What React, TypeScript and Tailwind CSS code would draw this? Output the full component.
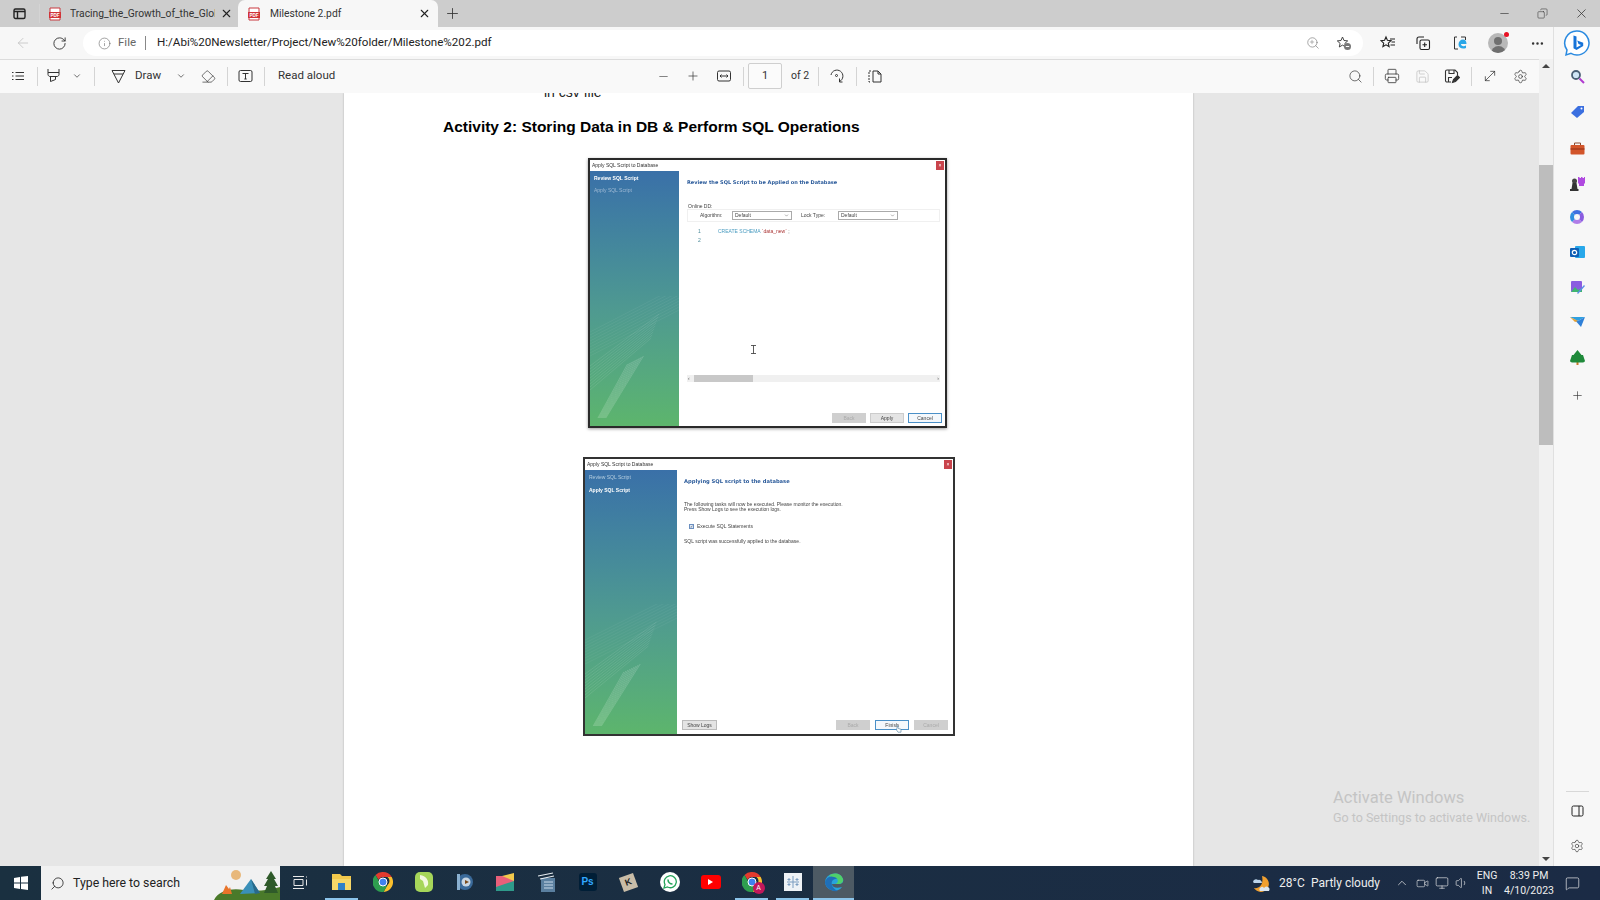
import { ChevronDown, Eraser, Minus, Plus, Search, Printer, Save, Settings, MoveDiagonal, RotateCw, Info, ArrowLeft, X, MoreHorizontal, ChevronUp, Volume1, Monitor, MessageSquare, Video, Copy } from 'lucide-react'

const UI = "font-['Roboto',sans-serif]"

function Sep({ className = '' }: { className?: string }) {
  return <div className={`w-px h-[19px] bg-[#d4d4d4] shrink-0 ${className}`} />
}

function PdfIcon() {
  return (
    <svg width="14" height="14" viewBox="0 0 14 14" className="shrink-0">
      <path d="M2 1h10v12H2z" fill="#fff" stroke="#c8383f" />
      <rect x="1" y="5" width="12" height="6" fill="#d13438" />
      <text x="7" y="9.6" fontSize="4.6" fontWeight="700" fill="#fff" textAnchor="middle" fontFamily="Liberation Sans">PDF</text>
    </svg>
  )
}

function Tabs() {
  return (
    <div className={`h-[27px] bg-[#cdcdcd] flex items-center text-[10.300px] text-[#333] ${UI}`}>
      <div className="w-[39px] flex justify-center">
        <svg width="13" height="13" viewBox="0 0 13 13" fill="none" stroke="#222" strokeWidth="1.4">
          <rect x="1" y="2" width="11" height="9.5" rx="1.5" />
          <path d="M1 4.500h11M4.500 4.500v7" />
        </svg>
      </div>
      <Sep className="h-[18px] bg-[#8f8f8f]" />
      <div className="w-[198px] h-full flex items-center pl-[8px]">
        <PdfIcon />
        <div className="ml-[8px] w-[145px] overflow-hidden whitespace-nowrap mt-[1px]">Tracing_the_Growth_of_the_Glob</div>
        <X size={13} className="ml-[5px] text-[#222]" />
      </div>
      <div className="w-[200px] h-full bg-[#f7f7f7] rounded-t-[7px] flex items-center pl-[9px]">
        <PdfIcon />
        <div className="ml-[9px] flex-1 mt-[1px]">Milestone 2.pdf</div>
        <X size={13} className="mr-[7px] text-[#222]" />
      </div>
      <Plus size={17} strokeWidth={1.2} className="ml-[6px] text-[#333]" />
      <div className="ml-auto flex items-center text-[#333]">
        <Minus size={13} strokeWidth={1.2} className="mr-[26px]" />
        <Copy size={11} strokeWidth={1.2} className="mr-[26px] -scale-x-100" />
        <X size={15} strokeWidth={1.2} className="mr-[11px]" />
      </div>
    </div>
  )
}

function StarAdd() {
  return (
    <svg width="16" height="16" viewBox="0 0 16 16" fill="none" stroke="#444" strokeWidth="1">
      <path d="M6.5 2l1.5 3.5 3.7.4-2.8 2.5.8 3.6-3.2-1.9-3.2 1.9.8-3.6L1.3 5.900l3.700-.4z" />
      <circle cx="11.500" cy="11.500" r="3.500" fill="#777" stroke="none" />
      <path d="M9.800 11.500h3.400" stroke="#fff" />
    </svg>
  )
}

function Favorites() {
  return (
    <svg width="16" height="16" viewBox="0 0 16 16" fill="none" stroke="#222" strokeWidth="1.100">
      <path d="M6 2l1.400 3.300 3.600.4-2.700 2.400.8 3.500L6 9.800l-3.100 1.800.8-3.500L1 5.700l3.600-.4z" />
      <path d="M10 4h5M11.500 7h3.500M10.500 10h4.500" />
    </svg>
  )
}

function Collections() {
  return (
    <svg width="16" height="16" viewBox="0 0 16 16" fill="none" stroke="#222" strokeWidth="1.100">
      <path d="M2 9V4a2 2 0 0 1 2-2h5" />
      <rect x="5" y="5" width="9.500" height="9.500" rx="1.500" />
      <path d="M9.700 7.500v4.500M7.500 9.700H12" />
    </svg>
  )
}

function EdgeE() {
  return (
    <svg width="16" height="16" viewBox="0 0 16 16" fill="none">
      <path d="M5 2H2.500v12H6M9 2h4.500v3" stroke="#333" strokeWidth="1" />
      <path d="M6.500 9.500c0-3 2-5 4.500-5s3.500 2 3.500 4.500H9c0 2 2.500 3 5 1.500v2.500c-3.500 1.500-7.500 0-7.500-3.500z" fill="#2aa7e8" />
    </svg>
  )
}

function Profile() {
  return (
    <div className="relative w-[20px] h-[20px] rounded-full bg-[#b8b8b8] overflow-hidden">
      <div className="mx-auto mt-[4px] w-[8px] h-[8px] rounded-full bg-[#6f6f6f]" />
      <div className="mx-auto mt-[1px] w-[15px] h-[8px] rounded-t-full bg-[#6f6f6f]" />
    </div>
  )
}

function AddressBar() {
  return (
    <div className={`h-[32px] flex items-center bg-[#f7f7f7] text-[#333] ${UI}`}>
      <ArrowLeft size={16} strokeWidth={1.200} className="ml-[15px] text-[#c2c2c2]" />
      <RotateCw size={15} strokeWidth={1.500} className="ml-[21px] text-[#333]" />
      <div className="ml-[16px] w-[1280px] h-[26px] bg-white rounded-full flex items-center">
        <Info size={13} strokeWidth={1.100} className="ml-[15px] text-[#666]" />
        <span className="ml-[7px] w-[18px] text-[11.500px] text-[#666]">File</span>
        <div className="ml-[9px] w-px h-[14px] bg-[#888]" />
        <span className="ml-[11px] text-[11.600px] text-[#222] whitespace-nowrap">H:/Abi%20Newsletter/Project/New%20folder/Milestone%202.pdf</span>
        <div className="ml-auto flex items-center">
          <div className="relative w-[14px] h-[14px] mr-[16px]">
            <Search size={14} strokeWidth={1.100} className="text-[#777]" />
            <Plus size={6} className="absolute left-[3px] top-[3px] text-[#777]" />
          </div>
          <div className="mr-[11px]"><StarAdd /></div>
        </div>
      </div>
      <div className="ml-[17px]"><Favorites /></div>
      <div className="ml-[19px]"><Collections /></div>
      <div className="ml-[21px]"><EdgeE /></div>
      <div className="relative ml-[20px]">
        <Profile />
        <div className="absolute -right-[1px] -top-[1px] w-[5px] h-[5px] rounded-full bg-[#e81123]" />
      </div>
      <MoreHorizontal size={15} className="ml-[22px] text-[#333]" />
    </div>
  )
}

function HighlightIcon() {
  return (
    <svg width="15" height="16" viewBox="0 0 15 16" fill="none" stroke="#333" strokeWidth="1">
      <path d="M2 1v5.500c0 1 1 2 2 2h7c1 0 2-1 2-2V1M2 4.500h11M4.500 8.500v5l5-2v-3" />
    </svg>
  )
}

function DrawIcon() {
  return (
    <svg width="15" height="16" viewBox="0 0 15 16" fill="none" stroke="#333" strokeWidth="1">
      <path d="M1 2.500h13L7.500 15zM3 6h9" />
    </svg>
  )
}

function ReadBox() {
  return (
    <svg width="15" height="14" viewBox="0 0 15 14" fill="none" stroke="#333" strokeWidth="1">
      <rect x="1" y="1.500" width="13" height="11" rx="1.500" />
      <path d="M4.500 4.500h6M7.500 4.500v5.500M6.300 10h2.400" />
    </svg>
  )
}

function FitIcon() {
  return (
    <svg width="14" height="12" viewBox="0 0 14 12" fill="none" stroke="#333" strokeWidth="1">
      <rect x="0.500" y="1" width="13" height="10" rx="1.500" />
      <path d="M3 6h8M4.500 4.500L3 6l1.500 1.500M9.500 4.500L11 6 9.500 7.500" />
    </svg>
  )
}

function RotateIcon() {
  return (
    <svg width="15" height="16" viewBox="0 0 15 16" fill="none" stroke="#333" strokeWidth="1">
      <path d="M2 7a6 6 0 1 1 8.500 6.500M10.500 10.500v3.500h3" />
      <circle cx="7.500" cy="7.500" r="1" />
    </svg>
  )
}

function PageViewIcon() {
  return (
    <svg width="14" height="13" viewBox="0 0 14 13" fill="none" stroke="#333" strokeWidth="1">
      <path d="M3 1H1v11h2" strokeDasharray="2 1" />
      <path d="M5 1h5l3 3v8H5zM10 1v3h3" />
    </svg>
  )
}

function SaveAsIcon() {
  return (
    <svg width="16" height="16" viewBox="0 0 16 16" fill="none" stroke="#333" strokeWidth="1.100">
      <path d="M7 14H3a1.500 1.500 0 0 1-1.500-1.500v-9A1.500 1.500 0 0 1 3 2h8l2.500 2.500V7M5 2v3.500h5V2M4.500 14V9.500H8" />
      <path d="M8.500 14.500l1-3 4-4 2 2-4 4z" fill="#333" />
    </svg>
  )
}

function PdfToolbar() {
  return (
    <div className={`h-[34px] shrink-0 bg-[#f9f9f9] border-t border-[#dcdcdc] pb-[1px] flex items-center text-[#333] whitespace-nowrap ${UI}`}>
      <svg width="14" height="12" viewBox="0 0 14 12" className="ml-[11px]" fill="none" stroke="#333">
        <path d="M4.500 2.500H13M4.500 6H13M4.500 9.500H13M1 2.500h1.500M1 6h1.500M1 9.500h1.500" />
      </svg>
      <Sep className="ml-[12px]" />
      <div className="ml-[7.500px]"><HighlightIcon /></div>
      <ChevronDown size={10} className="ml-[11.500px] text-[#555]" />
      <Sep className="ml-[12px]" />
      <div className="ml-[15.500px]"><DrawIcon /></div>
      <span className="ml-[9.500px] w-[28px] text-[11.500px]">Draw</span>
      <ChevronDown size={10} className="ml-[13px] text-[#555]" />
      <Eraser size={15} strokeWidth={1.100} className="ml-[14.500px] -scale-x-100" />
      <Sep className="ml-[11.500px]" />
      <div className="ml-[9.500px]"><ReadBox /></div>
      <Sep className="ml-[11.500px]" />
      <span className="ml-[13px] w-[58px] text-[11.500px]">Read aloud</span>

      <Minus size={13} strokeWidth={1.200} className="ml-[320.500px] text-[#444]" />
      <Plus size={14} strokeWidth={1.200} className="ml-[16.500px]" />
      <div className="ml-[17px]"><FitIcon /></div>
      <Sep className="ml-[12px]" />
      <div className="ml-[4px] w-[34px] h-[26px] border border-[#cfcfcf] rounded-[2px] bg-[#fbfbfb] flex items-center justify-center text-[11px]">1</div>
      <span className="ml-[9px] w-[17px] text-[10.500px]">of 2</span>
      <Sep className="ml-[10px]" />
      <div className="ml-[10px]"><RotateIcon /></div>
      <Sep className="ml-[11.500px]" />
      <div className="ml-[11px]"><PageViewIcon /></div>

      <Search size={15} strokeWidth={1.100} className="ml-[466px]" />
      <Sep className="ml-[10.500px]" />
      <Printer size={16} strokeWidth={1.200} className="ml-[10px]" />
      <Save size={15} strokeWidth={1.100} className="ml-[14.500px] text-[#bdbdbd]" />
      <div className="ml-[14.500px]"><SaveAsIcon /></div>
      <Sep className="ml-[11px]" />
      <MoveDiagonal size={16} strokeWidth={1.100} className="ml-[10px]" />
      <Settings size={15} strokeWidth={1.100} className="ml-[14.500px]" />
    </div>
  )
}

function Rays() {
  const fan = [0, 1, 2, 3, 4, 5, 6, 7, 8]
  return (
    <svg viewBox="0 0 90 130" preserveAspectRatio="none" className="absolute left-0 bottom-0 w-full h-[130px]" fill="none" stroke="#fff" strokeWidth="0.8">
      {fan.map((i) => (
        <path key={i} d={`M${8 + i} 122L${38 + i * 2} ${68 - i}`} opacity="0.22" />
      ))}
      {fan.map((i) => (
        <path key={i} d={`M0 ${94 - i * 3}L${62 + i} ${42 - i * 3}`} opacity="0.12" />
      ))}
      {fan.map((i) => (
        <path key={i} d={`M0 ${60 - i * 3}L90 ${14 - i * 3}`} opacity="0.07" />
      ))}
    </svg>
  )
}

const dlgText = "font-['Liberation_Sans',sans-serif] text-[5px] leading-none"

function Btn({ label, kind }: { label: string; kind: 'off' | 'on' | 'focus' }) {
  const look = kind === 'off' ? 'bg-[#cfcfcf] text-[#aaa]' : kind === 'on' ? 'bg-[#e4e4e4] text-[#444] border border-[#ccc]' : 'bg-[#f4f8fc] text-[#444] border border-[#4a90c8]'
  return <div className={`w-[34px] h-[10px] flex items-center justify-center ${dlgText} ${look}`}>{label}</div>
}

function Select() {
  return (
    <div className="w-[60px] h-[9px] border border-[#aaa] flex items-center justify-between px-[2px] text-[5px] text-[#444]">
      Default
      <ChevronDown size={5} />
    </div>
  )
}

function TitleBar({ h }: { h: string }) {
  return (
    <div className={`${h} shrink-0 bg-white flex items-center justify-between pl-[2px] pr-[1px] ${dlgText} text-[#333]`}>
      Apply SQL Script to Database
      <div className="w-[8px] h-[9px] bg-[#c9444c] flex items-center justify-center text-white text-[5px]">×</div>
    </div>
  )
}

function FirstDialog() {
  return (
    <div className="relative w-[359px] h-[270px] ml-[244px] mt-[21px] border-2 border-[#2a2a2a] shadow-[0_1px_3px_rgba(0,0,0,0.4)] flex flex-col bg-white blur-[0.4px]">
      <TitleBar h="h-[11px]" />
      <div className="flex-1 flex">
        <div className="relative w-[89px] bg-linear-to-b from-[#3a70a8] via-[#4f9a90] via-55% to-[#5db56c] pl-[4px] pt-[5px] overflow-hidden">
          <div className={`${dlgText} font-bold text-white`}>Review SQL Script</div>
          <div className={`${dlgText} text-[#9db9d4] mt-[7px]`}>Apply SQL Script</div>
          <Rays />
        </div>
        <div className="flex-1 flex flex-col pl-[8px] pr-[5px] bg-white">
          <div className="mt-[9px] font-['DejaVu_Sans',sans-serif] font-bold text-[5px] leading-none text-[#2a5a9a] whitespace-nowrap">Review the SQL Script to be Applied on the Database</div>
          <div className={`${dlgText} text-[#444] mt-[19px] ml-[1px]`}>Online DD:</div>
          <div className="flex items-center h-[13px] border border-[#f0f0f0] pl-[12px] text-[5px] text-[#444] font-['Liberation_Sans',sans-serif]">
            <span className="w-[32px]">Algorithm:</span>
            <Select />
            <span className="ml-[9px] w-[37px]">Lock Type:</span>
            <Select />
          </div>
          <div className={`flex ${dlgText} mt-[5px] ml-[11px]`}>
            <div className="w-[20px] text-[#4a8a9a] leading-[9px]">1<br />2</div>
            <div className="text-[#4a9cc0] leading-[9px]">CREATE SCHEMA <span className="text-[#a33]">`data_new`</span> <span className="text-[#555]">;</span></div>
          </div>
          <div className="mt-[130px] h-[7px] bg-[#f0f0f0] flex items-center px-[1px]">
            <span className="text-[5px] leading-none text-[#555]">‹</span>
            <div className="ml-[4px] w-[59px] h-full bg-[#c8c8c8]" />
            <span className="ml-auto text-[5px] leading-none text-[#555]">›</span>
          </div>
          <div className="mt-auto mb-[3px] -mr-[2px] flex justify-end gap-[4px]">
            <Btn label="Back" kind="off" />
            <Btn label="Apply" kind="on" />
            <Btn label="Cancel" kind="focus" />
          </div>
        </div>
      </div>
      {/* text cursor left over the dialog */}
      <svg width="5" height="9" viewBox="0 0 5 9" className="absolute left-[161px] top-[185px]" fill="none" stroke="#333" strokeWidth="0.8">
        <path d="M0 .5h5M0 8.500h5M2.500.5v8" />
      </svg>
    </div>
  )
}

function SecondDialog() {
  return (
    <div className="relative w-[372px] h-[279px] ml-[239px] mt-[29px] border-2 border-[#333] flex flex-col bg-white blur-[0.4px]">
      <TitleBar h="h-[11px]" />
      <div className="flex-1 flex">
        <div className="relative w-[92px] bg-linear-to-b from-[#3a70a8] via-[#4f9a90] via-55% to-[#5db56c] pl-[4px] pt-[5px] overflow-hidden">
          <div className={`${dlgText} text-[#b5cde0]`}>Review SQL Script</div>
          <div className={`${dlgText} font-bold text-white mt-[8px]`}>Apply SQL Script</div>
          <Rays />
        </div>
        <div className="flex-1 flex flex-col pl-[7px] pr-[5px] bg-white">
          <div className="mt-[9px] font-['DejaVu_Sans',sans-serif] font-bold text-[5.200px] leading-none text-[#2a5a9a]">Applying SQL script to the database</div>
          <div className={`${dlgText} text-[#444] mt-[18px] leading-[7px]`}>
            The following tasks will now be executed. Please monitor the execution.<br />Press Show Logs to see the execution logs.
          </div>
          <div className={`${dlgText} text-[#444] mt-[12px] ml-[5px] flex items-center gap-[3px]`}>
            <div className="w-[5px] h-[5px] border border-[#6b8fc0] bg-[#dfe8f5] text-[4px] text-[#345] flex items-center justify-center">✓</div>
            Execute SQL Statements
          </div>
          <div className={`${dlgText} text-[#444] mt-[10px]`}>SQL script was successfully applied to the database.</div>
          <div className="mt-auto mb-[4px] -ml-[2px] flex items-center gap-[5px]">
            <div className={`w-[35px] h-[10px] bg-[#e4e4e4] border border-[#bbb] mr-auto flex items-center justify-center ${dlgText} text-[#444]`}>Show Logs</div>
            <Btn label="Back" kind="off" />
            <Btn label="Finish" kind="focus" />
            <Btn label="Cancel" kind="off" />
          </div>
        </div>
      </div>
      {/* mouse pointer left over the Finish button */}
      <svg width="6" height="8" viewBox="0 0 6 8" className="absolute left-[311px] top-[266px]" fill="#fff" stroke="#4a7a9a" strokeWidth="0.6">
        <path d="M1.500.5l.8 3 2.700.8v2.900H2L.5 5z" />
      </svg>
    </div>
  )
}

function PdfPage() {
  return (
    <div className="flex-1 relative bg-[#e6e6e6] overflow-hidden flex justify-center">
      <div className="w-[849px] mr-[2px] h-full bg-white shadow-[0_0_2px_rgba(0,0,0,0.25)] font-['Liberation_Sans',sans-serif]">
        <div className="-mt-[8px] pl-[200px] text-[14px] leading-[14px] text-[#222]">in csv file</div>
        <div className="mt-[18px] pl-[99px] text-[15.500px] leading-[20px] font-bold text-black whitespace-nowrap">Activity 2: Storing Data in DB &amp; Perform SQL Operations</div>
        <FirstDialog />
        <SecondDialog />
      </div>
      <div className={`absolute left-[1333px] top-[694px] text-[#c4c4c4] whitespace-nowrap ${UI}`}>
        <div className="text-[16.500px] leading-[22px]">Activate Windows</div>
        <div className="text-[12.500px] leading-[17px]">Go to Settings to activate Windows.</div>
      </div>
    </div>
  )
}

function Scrollbar() {
  return (
    <div className="w-[14px] shrink-0 bg-[#f1f1f1] flex flex-col items-center text-[#444]">
      <div className="h-[106px] w-full">
        <div className="mt-[5px] mx-auto w-0 h-0 border-x-[4px] border-x-transparent border-b-[4px] border-b-[#444]" />
      </div>
      <div className="w-full h-[280px] bg-[#bdbdbd]" />
      <div className="mt-auto mb-[5px] w-0 h-0 border-x-[4px] border-x-transparent border-t-[4px] border-t-[#444]" />
    </div>
  )
}

function Bing() {
  return (
    <svg width="28" height="28" viewBox="0 0 28 28" fill="none">
      <path d="M14 2a12 12 0 1 1-6 22.400L3 26l1-5A12 12 0 0 1 14 2z" fill="#fff" stroke="#2a8ae0" strokeWidth="1.500" />
      <path d="M10.500 6.500l3 1v11l4.500-2.500-2.500-1-1.300-3.500 6 2.200v3.300l-6.700 4-3-1.800z" fill="#1673d8" />
    </svg>
  )
}

function SideIcons() {
  return (
    <div className="flex flex-col items-center h-full">
      <div className="h-[32px] flex items-center"><Bing /></div>
      {/* search */}
      <svg width="15" height="15" viewBox="0 0 15 15" className="mt-[10px]" fill="none">
        <circle cx="6" cy="6" r="4" stroke="#4a5f75" strokeWidth="1.800" fill="#cfe5f5" />
        <path d="M9.500 9.500l4.500 4.500" stroke="#b03ad0" strokeWidth="2" />
      </svg>
      {/* tag */}
      <svg width="15" height="14" viewBox="0 0 15 14" className="mt-[21px]">
        <path d="M1 8l7-7h6v6l-7 6z" fill="#3b6fe0" />
        <circle cx="11.500" cy="3.500" r="1" fill="#fff" />
      </svg>
      {/* toolbox */}
      <svg width="15" height="13" viewBox="0 0 15 13" className="mt-[22.500px]">
        <path d="M4.500 3V1h6v2" fill="none" stroke="#8a4a30" />
        <rect x="0.500" y="3" width="14" height="9.500" rx="1" fill="#d2552a" />
        <rect x="0.500" y="6.500" width="14" height="1" fill="#8f2f14" />
      </svg>
      {/* chess */}
      <svg width="15" height="15" viewBox="0 0 15 15" className="mt-[21px]">
        <path d="M8 1h1.500v1H11V1h1.500v1H14V1h1v6l-1 1v2H9V8L8 7z" fill="#b04ae0" />
        <circle cx="4.500" cy="5" r="2.500" fill="#444" />
        <path d="M2.500 7h4l1 6h1v2H0v-2h1.500z" fill="#333" />
      </svg>
      {/* copilot ring */}
      <div className="mt-[19.500px] w-[14px] h-[14px] rounded-full border-[4px] border-t-[#3f6fe0] border-r-[#8a5ce0] border-b-[#b07de8] border-l-[#2f8fe0]" />
      {/* outlook */}
      <svg width="15" height="14" viewBox="0 0 15 14" className="mt-[21px]">
        <rect x="5" y="1" width="10" height="12" rx="1" fill="#28a8ea" />
        <rect x="0" y="3" width="9" height="9" rx="1" fill="#0f5fb5" />
        <circle cx="4.500" cy="7.500" r="2.200" fill="none" stroke="#fff" strokeWidth="1.200" />
      </svg>
      {/* image creator */}
      <svg width="15" height="15" viewBox="0 0 15 15" className="mt-[20.500px]">
        <rect x="1" y="1" width="11" height="11" rx="1" fill="#8a5ce0" />
        <path d="M1 12l4-5 3 3 4-2v4H1z" fill="#3fb56f" />
        <path d="M7 13l7-8 1 1-7 8z" fill="#5a8fe8" />
      </svg>
      {/* send */}
      <svg width="15" height="12" viewBox="0 0 15 12" className="mt-[20.500px]">
        <path d="M0 2h15L8 6z" fill="#2fa0e0" />
        <path d="M4 4l4 2 7-4-4 10z" fill="#2f80d8" />
        <path d="M0 2l8 4-3 1z" fill="#e8a030" />
      </svg>
      {/* tree */}
      <svg width="15" height="15" viewBox="0 0 15 15" className="mt-[22.500px]">
        <rect x="6.500" y="11" width="2" height="4" fill="#c77a2a" />
        <path d="M7.500 0l4 5H13l2 6a3 2 0 0 1-2 1.500H2A3 2 0 0 1 0 11l2-6h1.500z" fill="#1f8a3a" />
      </svg>
      <Plus size={13} strokeWidth={1.200} className="mt-[24px] text-[#333]" />

      <div className="mt-auto w-[23px] h-px bg-[#d8d8d8]" />
      <svg width="13" height="12" viewBox="0 0 13 12" className="mt-[13px]" fill="none" stroke="#222" strokeWidth="1">
        <rect x="1" y="1" width="11" height="10" rx="1.500" />
        <path d="M8 1v10" />
      </svg>
      <Settings size={14} strokeWidth={1.100} className="mt-[22px] mb-[13px] text-[#333]" />
    </div>
  )
}

function SearchArt() {
  return (
    <svg width="66" height="33" viewBox="0 0 66 33" className="shrink-0">
      <path d="M0 33c5-10 18-12 30-10s26 0 36-3v13z" fill="#4a7a2a" />
      <circle cx="22" cy="8" r="5" fill="#e8b87a" />
      <path d="M26 27l11-15 9 14z" fill="#3a90b8" />
      <path d="M37 12l9 14-5 1z" fill="#2a6a8a" />
      <path d="M8 27l4-9 3 4 1-2 2 7z" fill="#e8742a" />
      <path d="M57 4l5 8h-2l4 7h-3l3 7H50l3-7h-3l4-7h-2z" fill="#2f5a2a" />
    </svg>
  )
}

function Underlined({ on, hl, children }: { on?: boolean; hl?: boolean; children: React.ReactNode }) {
  return (
    <div className={`w-[41px] h-full flex flex-col items-center shrink-0 ${hl ? 'bg-[#4d5a64]' : ''}`}>
      <div className="flex-1 flex items-center">{children}</div>
      {on ? <div className={hl ? 'h-[2px] w-[41px] bg-[#8cc4ea]' : 'h-[2px] w-[33px] bg-[#8cc4ea]'} /> : <div className="h-[2px]" />}
    </div>
  )
}

function ChromeIcon({ size = 20 }: { size?: number }) {
  return (
    <svg width={size} height={size} viewBox="0 0 20 20">
      <path d="M10 0a10 10 0 0 1 8.700 5H10a5 5 0 0 0-4.500 2.800L2.500 3A10 10 0 0 1 10 0z" fill="#e33b2e" />
      <path d="M18.700 5A10 10 0 0 1 10.500 20l4-7a5 5 0 0 0 0-8z" fill="#fbc02d" />
      <path d="M2.500 3l4 7a5 5 0 0 0 8 3l-4 7A10 10 0 0 1 2.500 3z" fill="#2e9e4f" />
      <circle cx="10" cy="10" r="4" fill="#3f82f0" stroke="#fff" strokeWidth="1" />
    </svg>
  )
}

function Taskbar() {
  return (
    <div className={`h-[34px] shrink-0 bg-linear-to-r from-[#1a3040] to-[#1b2b45] flex items-stretch text-white ${UI}`}>
      <div className="w-[41px] flex items-center justify-center">
        <svg width="14" height="14" viewBox="0 0 14 14" fill="#fff">
          <path d="M0 2l6-1v5.500H0zM7 .8L14 0v6.500H7zM0 7.500h6V13l-6-1zM7 7.500h7V14l-7-1z" />
        </svg>
      </div>
      <div className="w-[239px] bg-[#f1f1f1] flex items-center text-[#222] overflow-hidden">
        <Search size={15} strokeWidth={1.300} className="ml-[9px] -scale-x-100 text-[#222]" />
        <span className="ml-[8px] text-[12.300px] flex-1 whitespace-nowrap">Type here to search</span>
        <SearchArt />
      </div>
      <Underlined>
        <svg width="15" height="13" viewBox="0 0 15 13" fill="none" stroke="#e8e8e8">
          <path d="M0 .5h11M0 12.500h11M1 3.500h9v6H1zM13.500 .5v1M13.500 3.500v6" />
        </svg>
      </Underlined>
      <Underlined on>
        <svg width="19" height="16" viewBox="0 0 19 16"><path d="M0 0h8l2 2h9v14H0z" fill="#f2c94c" /><rect x="0" y="5" width="19" height="11" fill="#f6d768" /><rect x="6" y="9" width="7" height="7" fill="#2f80c8" /></svg>
      </Underlined>
      <Underlined><ChromeIcon /></Underlined>
      <Underlined>
        <svg width="18" height="20" viewBox="0 0 18 20"><rect width="18" height="20" rx="5" fill="#a6d65a" /><path d="M5 3c6 1 9 5 8 10l-3 3-2-7-3-2z" fill="#f2f8e0" /></svg>
      </Underlined>
      <Underlined>
        <svg width="18" height="20" viewBox="0 0 18 20"><circle cx="9" cy="10" r="8" fill="#3a6a9a" /><circle cx="10" cy="10" r="4.500" fill="#c9d6e2" /><path d="M9 8l4 2-4 2z" fill="#7a4a1a" /><rect x="1" y="2" width="3" height="16" fill="#8ab0d0" /></svg>
      </Underlined>
      <Underlined>
        <svg width="20" height="19" viewBox="0 0 20 19"><rect y="3" width="18" height="15" fill="#2f9a8a" /><path d="M0 3h18v5L0 14z" fill="#e8607a" /><path d="M6 3l12-3v8z" fill="#f2c94c" /></svg>
      </Underlined>
      <Underlined>
        <svg width="18" height="20" viewBox="0 0 18 20"><rect x="3" y="6" width="14" height="14" fill="#5a7f9f" /><path d="M6 10h9M6 13h9M6 16h9" stroke="#c9dbea" /><path d="M0 4l15-3M2 7l14-3" stroke="#e8eef2" strokeWidth="1.200" /></svg>
      </Underlined>
      <Underlined>
        <div className="w-[18px] h-[18px] rounded-[3px] bg-[#001e36] flex items-center justify-center text-[10px] font-bold leading-none text-[#31a8ff] font-['Liberation_Sans',sans-serif]">Ps</div>
      </Underlined>
      <Underlined>
        <div className="w-[15px] h-[15px] rotate-[-20deg] bg-[#c9bda8] flex items-center justify-center text-[9px] font-bold text-[#222] font-['Liberation_Sans',sans-serif]">K</div>
      </Underlined>
      <Underlined>
        <div className="w-[20px] h-[20px] rounded-full bg-white flex items-center justify-center">
          <svg width="14" height="14" viewBox="0 0 14 14" fill="none"><path d="M1 13l1-3.500A6 6 0 1 1 4.500 12z" stroke="#25a35a" strokeWidth="1.300" /><path d="M5 4.500c0 2.500 2 4.500 4.500 4.500" stroke="#25a35a" strokeWidth="1.600" /></svg>
        </div>
      </Underlined>
      <Underlined>
        <div className="w-[20px] h-[14px] rounded-[3px] bg-[#f00] flex items-center justify-center">
          <div className="w-0 h-0 border-y-[3px] border-y-transparent border-l-[5px] border-l-white" />
        </div>
      </Underlined>
      <Underlined on>
        <div className="relative">
          <ChromeIcon />
          <div className="absolute -right-[3px] -bottom-[2px] w-[12px] h-[12px] rounded-full bg-[#c2185b] flex items-center justify-center text-[7px] leading-none">A</div>
        </div>
      </Underlined>
      <Underlined on>
        <div className="w-[18px] h-[18px] bg-[#eef2f6] flex items-center justify-center">
          <svg width="14" height="14" viewBox="0 0 14 14" stroke="#7a9cc0" fill="none"><path d="M7 1v12M1 7h12M3 3v3M1.500 4.500h3M11 3v3M9.500 4.500h3M3 8v3M1.500 9.500h3M11 8v3M9.500 9.500h3" /></svg>
        </div>
      </Underlined>
      <Underlined on hl>
        <svg width="20" height="20" viewBox="0 0 20 20">
          <path d="M1 10a9.500 9.500 0 0 1 18-3c1 3-1 5-4 5H8c0 3 4 5 10 3a9.500 9.500 0 0 1-17-5z" fill="#28a3dc" />
          <path d="M1 10c1-4 5-6 8-6 4 0 8 2 10 4-4-2-13-2-11 5 .5 2 3 5 6 6-7 1-13-4-13-9z" fill="#1f6fb8" />
          <path d="M5 4c4-4 12-3 14 3 .5 2-1 5-4 5H11c4-1 4-6-1-7-2-.5-4 0-5-1z" fill="#4fd06a" />
        </svg>
      </Underlined>

      <div className="ml-auto flex items-center text-[12px] text-[#eee] pr-[20.500px] whitespace-nowrap">
        <svg width="22" height="20" viewBox="0 0 22 20">
          <path d="M11 3a8 8 0 1 1-8 12c5 1 10-3 8-12z" fill="#f0a030" />
          <path d="M2 9a3 3 0 0 1 5-2 3 3 0 0 1 4 3H3z" fill="#bcd4ea" />
          <path d="M9 18a2.500 2.500 0 0 1 4-3 2.500 2.500 0 0 1 5 3z" fill="#dbe6f0" />
        </svg>
        <span className="ml-[6px] w-[24px]">28°C</span>
        <span className="ml-[8px] w-[66px]">Partly cloudy</span>
        <ChevronUp size={14} strokeWidth={1.200} className="ml-[18px]" />
        <Video size={13} strokeWidth={1.100} className="ml-[6.500px]" />
        <Monitor size={14} strokeWidth={1.100} className="ml-[6.500px]" />
        <Volume1 size={14} strokeWidth={1.100} className="ml-[6px]" />
        <div className="ml-[5px] w-[26px] text-center text-[10.500px] leading-[15px]">ENG<br />IN</div>
        <div className="ml-[3px] w-[52px] text-center text-[10.500px] leading-[15px]">8:39 PM<br />4/10/2023</div>
        <MessageSquare size={15} strokeWidth={1.100} className="ml-[9.500px]" />
      </div>
    </div>
  )
}

export default function App() {
  return (
    <div className="w-[1600px] h-[900px] flex flex-col overflow-hidden bg-[#f7f7f7]">
      <Tabs />
      <div className="flex-1 flex min-h-0">
        <div className="w-[1553px] flex flex-col min-w-0">
          <AddressBar />
          <div className="flex-1 flex min-h-0">
            <div className="flex-1 flex flex-col min-w-0">
              <PdfToolbar />
              <PdfPage />
            </div>
            <Scrollbar />
          </div>
        </div>
        <div className="flex-1 border-l border-[#e0e0e0]">
          <SideIcons />
        </div>
      </div>
      <Taskbar />
    </div>
  )
}
